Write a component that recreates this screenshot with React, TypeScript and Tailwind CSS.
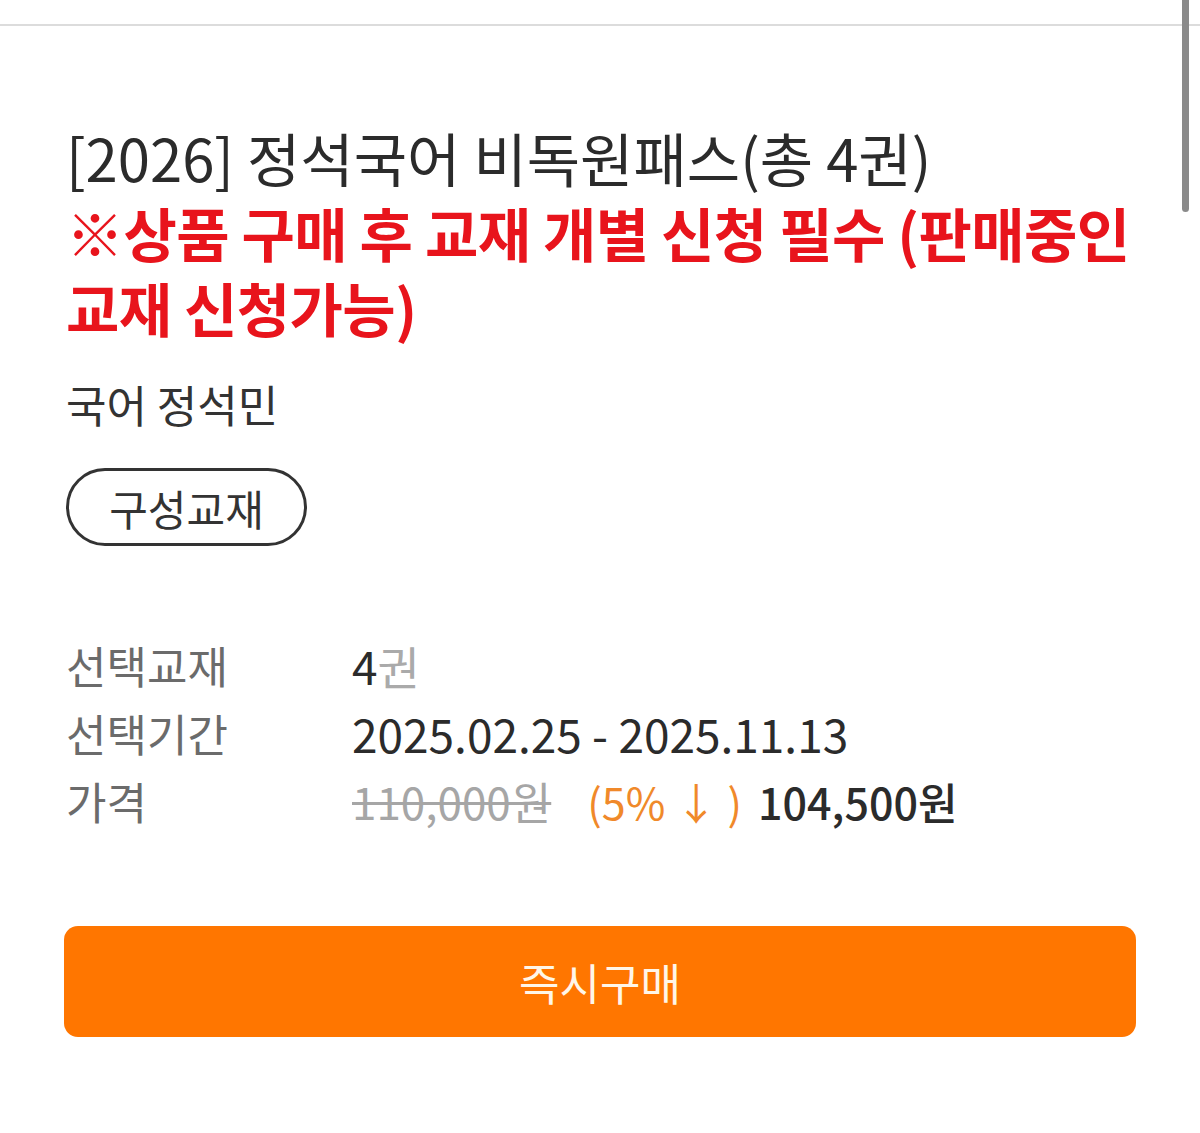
import React from 'react';

const font = { fontFamily: '"Noto Sans CJK KR", "Noto Sans", sans-serif' };

function InfoRow({ label, children }: { label: string; children: React.ReactNode }) {
  return (
    <div className="flex items-center h-[68px]">
      <div className="w-[286px] text-[44px] text-[#6b6b6b]">{label}</div>
      <div className="flex items-center">{children}</div>
    </div>
  );
}

export default function App() {
  return (
    <div className="relative w-[1200px] h-[1133px] bg-white overflow-hidden" style={font}>
      {/* 상단 구분선 */}
      <div className="h-[24px]" />
      <div className="h-[2px] bg-[#dcdcdc]" />

      {/* 스크롤바 */}
      <div className="absolute right-[11px] top-0 w-[7px] h-[212px] bg-[#8a8a8a] rounded-b-full" />

      <div className="px-[66px] pt-[94px]">
        <h1 className="text-[58px] leading-[75px] font-normal break-keep">
          <div className="text-[#2b2b2b]">[2026] 정석국어 비독원패스(총 4권)</div>
          <div className="text-[#e8141c] font-bold tracking-[-0.6px]">
            ※상품 구매 후 교재 개별 신청 필수 (판매중인 교재 신청가능)
          </div>
        </h1>

        <p className="mt-[31px] text-[44px] leading-[56px] text-[#333]">국어 정석민</p>

        <button className="mt-[36px] h-[78px] w-[241px] rounded-full border-[3px] border-[#333] text-[42px] text-[#333] flex items-center justify-center">
          구성교재
        </button>

        <div className="mt-[85px]">
          <InfoRow label="선택교재">
            <span className="text-[46px] text-[#2b2b2b]">4</span>
            <span className="text-[46px] text-[#aaaaaa]">권</span>
          </InfoRow>
          <InfoRow label="선택기간">
            <span className="text-[46px] text-[#2b2b2b]">2025.02.25 - 2025.11.13</span>
          </InfoRow>
          <InfoRow label="가격">
            <span className="text-[44px] text-[#a6a6a6] line-through decoration-[3px]">110,000원</span>
            <span className="ml-[36px] text-[43px] text-[#f0892a]">(5% ↓ )</span>
            <span className="ml-[16px] text-[43px] text-[#2b2b2b] font-medium">104,500원</span>
          </InfoRow>
        </div>
      </div>

      <div className="px-[64px] pt-[91px]">
        <button className="w-full h-[111px] rounded-[14px] bg-[#ff7600] text-[#fff6e8] text-[44px] flex items-center justify-center">
          즉시구매
        </button>
      </div>
    </div>
  );
}
